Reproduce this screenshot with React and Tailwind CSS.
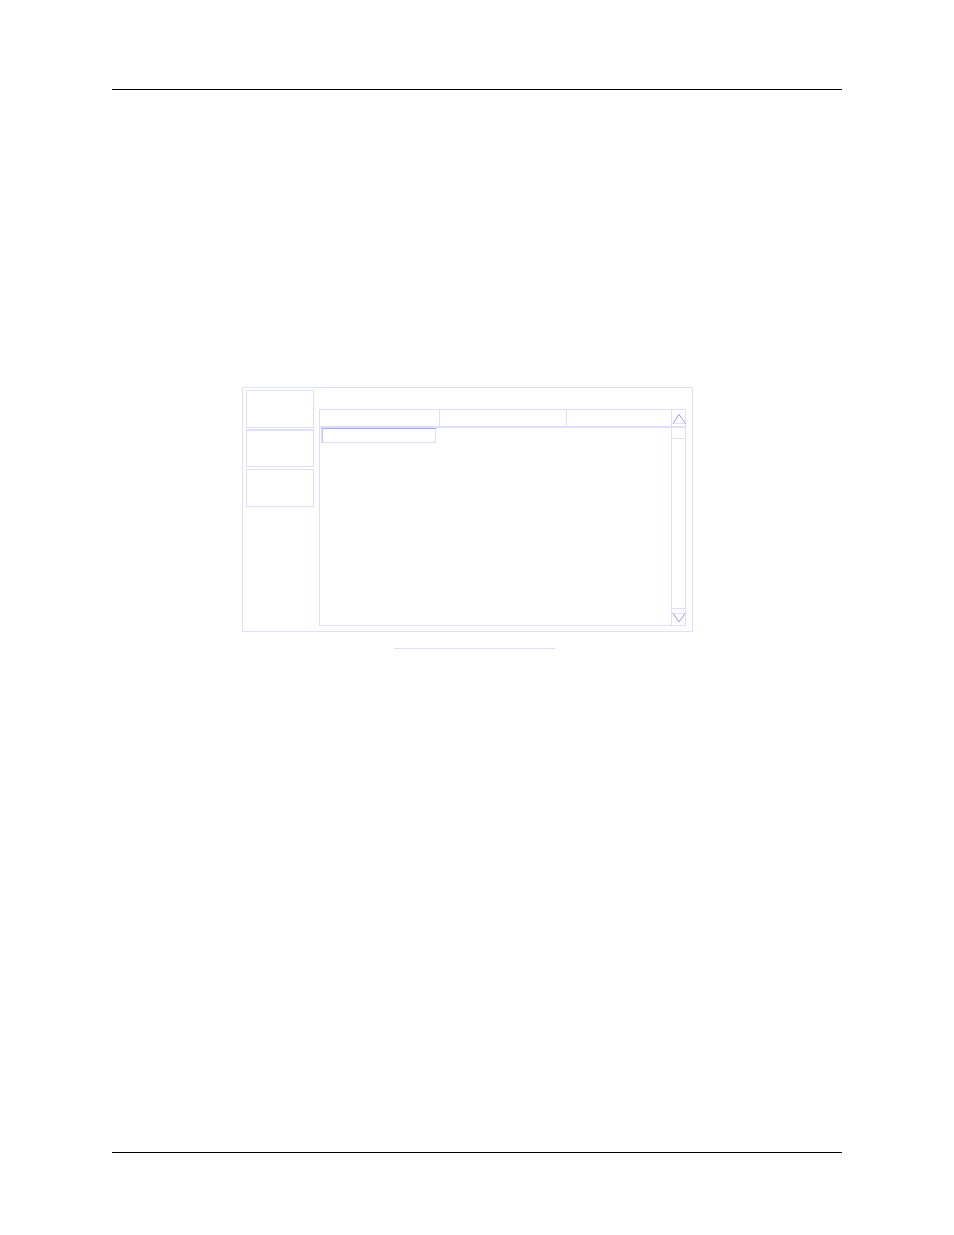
const actions = [
  { label: "First action", look: "border" },
  { label: "Second action", look: "border border-t-2" },
  { label: "Third action", look: "mt-px border" },
];

function Arrow({ sides, base }) {
  return (
    <svg
      className="block overflow-visible"
      width="13"
      height="16"
      viewBox="0 0 13 16"
      fill="none"
      aria-hidden="true"
    >
      <path d={base} stroke="#dedeff" />
      <path d={sides} stroke="#8c8cff" strokeWidth="0.9" />
    </svg>
  );
}

function ScrollBar() {
  return (
    <div className="flex w-[14px] shrink-0 flex-col border-l border-[#dedeff]">
      <button
        type="button"
        aria-label="Scroll up"
        className="h-[18px] shrink-0 border-b-2 border-[#dedeff]"
      >
        <Arrow sides="M1 13.5L7 4.5L13.5 13.5" base="M1 13.5H14" />
      </button>
      <div className="flex-1">
        <div className="h-[11px] border-b border-[#dedeff]" />
      </div>
      <button
        type="button"
        aria-label="Scroll down"
        className="h-[17px] shrink-0 border-t border-[#dedeff]"
      >
        <Arrow sides="M1 4.5L7 13L13 4.5" base="M0 4.5H14" />
      </button>
    </div>
  );
}

function ListTable() {
  return (
    <div className="flex h-[217px] min-w-0 flex-1 border border-[#dedeff]">
      <div className="min-w-0 flex-1">
        <table
          aria-label="Items"
          className="w-full table-fixed border-separate border-spacing-0"
        >
          <thead>
            <tr className="h-[18px]">
              <th className="w-[120px] border-r border-b-2 border-[#dedeff] p-0" />
              <th className="w-[127px] border-r border-b-2 border-[#dedeff] p-0" />
              <th className="border-b-2 border-[#dedeff] p-0" />
            </tr>
          </thead>
          <tbody>
            <tr>
              <td className="p-0 pl-px">
                <div className="w-[115px] border-l border-[#dedeff]">
                  <div className="h-[15px] border border-[#dedeff] border-t-[#a0a0ff] border-l-[#c4c4ff]" />
                </div>
              </td>
              <td className="p-0" />
              <td className="p-0" />
            </tr>
          </tbody>
        </table>
      </div>
      <ScrollBar />
    </div>
  );
}

export default function App() {
  return (
    <main className="min-h-screen bg-white px-28 pt-[89px] pb-[82px] font-['Liberation_Sans',sans-serif]">
      <hr className="border-t border-black" />
      <figure className="mt-[297px] mb-[503px] pr-[149px] pl-[130px]">
        <div className="flex gap-[5px] border border-[#dedeff] pt-[2px] pr-[6px] pb-[5px] pl-[3px]">
          <div className="flex w-[68px] shrink-0 flex-col gap-px">
            {actions.map((action) => (
              <button
                key={action.label}
                type="button"
                aria-label={action.label}
                className={`h-[38px] border-[#dedeff] ${action.look}`}
              />
            ))}
          </div>
          <div className="flex min-w-0 flex-1 pt-[19px]">
            <ListTable />
          </div>
        </div>
        <figcaption className="mt-4 ml-[152px] w-[161px] border-b border-[#dedeff]" />
      </figure>
      <hr className="border-t border-black" />
    </main>
  );
}
